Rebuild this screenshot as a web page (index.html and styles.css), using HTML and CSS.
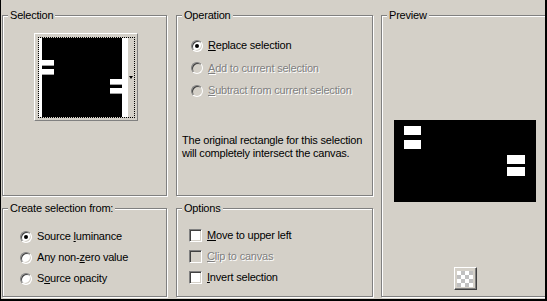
FILE: index.html
```html
<!DOCTYPE html>
<html lang="en">
<head>
  <meta charset="UTF-8">
  <title>Selection From Mask</title>
  <link rel="stylesheet" href="styles.css">
</head>
<body>
  <div class="dialog">
    <div class="group group-selection">
      <span class="group-title">Selection</span>
      <div class="thumb">
        <div class="thumb-inner">
          <div class="thumb-pad"></div>
          <div class="thumb-canvas">
            <span class="blob blob-a"></span>
            <span class="blob blob-b"></span>
            <span class="blob blob-c"></span>
            <span class="blob blob-d"></span>
          </div>
          <div class="thumb-strip"></div>
          <div class="thumb-drop"><span class="arrow"></span></div>
        </div>
      </div>
    </div>

    <div class="group group-operation">
      <span class="group-title">Operation</span>
      <div class="op-list">
        <div class="option"><span class="radio checked"></span><span><u>R</u>eplace selection</span></div>
        <div class="option disabled"><span class="radio"></span><span><u>A</u>dd to current selection</span></div>
        <div class="option disabled"><span class="radio"></span><span><u>S</u>ubtract from current selection</span></div>
      </div>
      <p class="op-note">The original rectangle for this selection<br>will completely intersect the canvas.</p>
    </div>

    <div class="group group-preview">
      <span class="group-title">Preview</span>
      <div class="preview-canvas">
        <span class="pblob pblob-a"></span>
        <span class="pblob pblob-b"></span>
        <span class="pblob pblob-c"></span>
        <span class="pblob pblob-d"></span>
      </div>
      <button class="checker-btn" type="button"><span class="checker"></span></button>
    </div>

    <div class="group group-source">
      <span class="group-title">Create selection from:</span>
      <div class="src-list">
        <div class="option"><span class="radio checked"></span><span>Source <u>l</u>uminance</span></div>
        <div class="option"><span class="radio"></span><span>Any non-<u>z</u>ero value</span></div>
        <div class="option"><span class="radio"></span><span>S<u>o</u>urce opacity</span></div>
      </div>
    </div>

    <div class="group group-options">
      <span class="group-title">Options</span>
      <div class="opt-list">
        <div class="option"><span class="check"></span><span><u>M</u>ove to upper left</span></div>
        <div class="option disabled"><span class="check"></span><span><u>C</u>lip to canvas</span></div>
        <div class="option"><span class="check"></span><span><u>I</u>nvert selection</span></div>
      </div>
    </div>
  </div>
</body>
</html>
```

FILE: styles.css
```css
body {
  margin: 0;
  background: #000;
  font-family: "Liberation Sans", Arial, sans-serif;
  font-size: 11px;
  letter-spacing: -0.2px;
  color: #000;
}
.dialog {
  width: 544px;
  height: 299px;
  margin-left: 1px;
  box-sizing: border-box;
  padding: 15px 0 0 1px;
  background: #d4d0c8;
  overflow: hidden;
  display: grid;
  grid-template-columns: 165px 197px 166px;
  grid-template-rows: 181px 89px;
  gap: 12px 9px;
}
.group {
  position: relative;
  border: 1px solid #808080;
  box-shadow: inset 1px 1px 0 #fff, 1px 1px 0 #fff;
}
.group-title {
  position: absolute;
  top: -7px;
  left: 5px;
  padding: 0 2px;
  line-height: 13px;
  background: #d4d0c8;
  white-space: nowrap;
}
.group-preview {
  grid-column: 3;
  grid-row: 1 / span 2;
  margin-left: -1px;
}

/* selection thumbnail */
.thumb {
  width: 104px;
  height: 88px;
  box-sizing: border-box;
  margin: 17px 0 0 31px;
  padding: 3px 2px 2px 3px;
  border: 1px solid;
  border-color: #fff #808080 #808080 #fff;
}
.thumb-inner {
  height: 79px;
  border: 1px dotted #000;
  display: flex;
}
.thumb-pad {
  width: 3px;
  background: #fff;
}
.thumb-canvas {
  position: relative;
  width: 80px;
  background: #000;
}
.thumb-strip {
  width: 6px;
  background: #fff;
}
.thumb-drop {
  flex: 1;
  display: flex;
  align-items: center;
  justify-content: center;
}
.arrow {
  width: 0;
  height: 0;
  border-left: 2.5px solid transparent;
  border-right: 2.5px solid transparent;
  border-top: 3px solid #000;
}
.blob {
  position: absolute;
  width: 12px;
  height: 5px;
  background: #fff;
  border-bottom: 1px solid #a0a0a0;
}
.blob-a { left: 0; top: 22px; }
.blob-b { left: 0; top: 31px; }
.blob-c { left: 68px; top: 41px; }
.blob-d { left: 68px; top: 50px; }

/* option rows */
.option {
  display: flex;
  align-items: center;
  gap: 5px;
  height: 13px;
  line-height: 13px;
  white-space: nowrap;
}
.option.disabled {
  color: #808080;
  text-shadow: 1px 1px 0 #fff;
}
.radio {
  position: relative;
  width: 12px;
  height: 12px;
  box-sizing: border-box;
  border-radius: 50%;
  border: 1px solid;
  border-color: #808080 #fff #fff #808080;
  box-shadow: inset 1px 1px 0 #404040, inset -1px -1px 0 #d4d0c8;
  background: #fff;
  flex: none;
}
.radio.checked::after {
  content: "";
  position: absolute;
  left: 3px;
  top: 3px;
  width: 4px;
  height: 4px;
  border-radius: 50%;
  background: #000;
}
.disabled .radio,
.disabled .check {
  background: #d4d0c8;
}
.check {
  width: 13px;
  height: 13px;
  box-sizing: border-box;
  border: 1px solid;
  border-color: #808080 #fff #fff #808080;
  box-shadow: inset 1px 1px 0 #404040, inset -1px -1px 0 #d4d0c8;
  background: #fff;
  flex: none;
}

.op-list {
  padding: 23px 0 0 14px;
  display: flex;
  flex-direction: column;
  gap: 9.5px;
}
.op-note {
  margin: 37px 0 0 5px;
  line-height: 13px;
}
.src-list {
  padding: 21px 0 0 17px;
  display: flex;
  flex-direction: column;
  gap: 8px;
}
.opt-list {
  padding: 20px 0 0 12px;
  display: flex;
  flex-direction: column;
  gap: 8px;
}

/* preview */
.preview-canvas {
  position: relative;
  width: 142px;
  height: 82px;
  margin: 104px 0 0 12px;
  background: #000;
}
.pblob {
  position: absolute;
  width: 17px;
  height: 9px;
  background: #fff;
}
.pblob-a { left: 10px; top: 6px; }
.pblob-b { left: 10px; top: 20px; }
.pblob-c { left: 113px; top: 35px; width: 18px; }
.pblob-d { left: 113px; top: 47px; width: 18px; }
.checker-btn {
  display: block;
  width: 23px;
  height: 23px;
  margin: 65px 0 0 72px;
  padding: 2px;
  box-sizing: border-box;
  border: 1px solid;
  border-color: #fff #404040 #404040 #fff;
  box-shadow: inset -1px -1px 0 #808080;
  background: #d4d0c8;
}
.checker {
  display: block;
  width: 16px;
  height: 16px;
  background-color: #fff;
  background-image: conic-gradient(#c0c0c0 25%, #fff 0 50%, #c0c0c0 0 75%, #fff 0);
  background-size: 8px 8px;
}
```
